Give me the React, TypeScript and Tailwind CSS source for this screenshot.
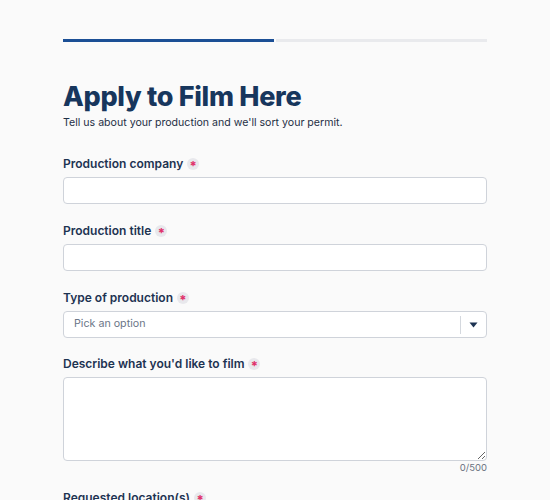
import React from "react";

function Req() {
  return (
    <span className="ml-[4px] inline-flex h-[12px] w-[12px] items-center justify-center rounded-full bg-[#e8e8ec] text-[13px] font-bold leading-none text-[#e0306a]">
      <span className="mt-[4px]">*</span>
    </span>
  );
}

function Label({ children }: { children: React.ReactNode }) {
  return (
    <label className="mb-[3px] flex items-center text-[12px] font-semibold leading-[20px] text-[#1d3352]">
      {children}
      <Req />
    </label>
  );
}

export default function App() {
  return (
    <main
      className="min-h-screen bg-[#fafafa] px-[63px] pt-[39px]"
      style={{ fontFamily: "Inter, 'Noto Sans', sans-serif" }}
    >
      <div className="flex gap-[2px]">
        <div className="h-[3px] flex-1 bg-[#1b4f95]" />
        <div className="h-[3px] flex-1 bg-[#e9eaed]" />
      </div>

      <h1 className="mt-[37px] text-[27px] font-extrabold leading-[36px] tracking-[-0.3px] text-[#17365d]">
        Apply to Film Here
      </h1>
      <p className="text-[10.6px] leading-[16px] text-[#1f2f45]">
        Tell us about your production and we'll sort your permit.
      </p>

      <div className="mt-[23px] flex flex-col">
        <Label>Production company</Label>
        <input className="h-[27px] w-full rounded-[4px] border border-[#cfd3da] bg-white" />

        <div className="mt-[17px]">
          <Label>Production title</Label>
          <input className="h-[27px] w-full rounded-[4px] border border-[#cfd3da] bg-white" />
        </div>

        <div className="mt-[17px]">
          <Label>Type of production</Label>
          <div className="flex h-[27px] w-full items-center rounded-[4px] border border-[#cfd3da] bg-white">
            <span className="flex-1 pl-[10px] text-[10.7px] text-[#6b7687]">Pick an option</span>
            <span className="h-[18px] w-px bg-[#d4d8de]" />
            <span className="flex w-[25px] items-center justify-center">
              <svg width="9" height="6" viewBox="0 0 9 6">
                <path d="M0.5 0.5h8L4.5 5.5z" fill="#1d3352" />
              </svg>
            </span>
          </div>
        </div>

        <div className="mt-[16px]">
          <Label>Describe what you'd like to film</Label>
          <textarea className="block h-[84px] w-full rounded-[4px] border border-[#cfd3da] bg-white" />
          <div className="text-right text-[9.5px] leading-[13px] text-[#6b7280]">0/500</div>
        </div>

        <div className="mt-[14px]">
          <Label>Requested location(s)</Label>
        </div>
      </div>
    </main>
  );
}
